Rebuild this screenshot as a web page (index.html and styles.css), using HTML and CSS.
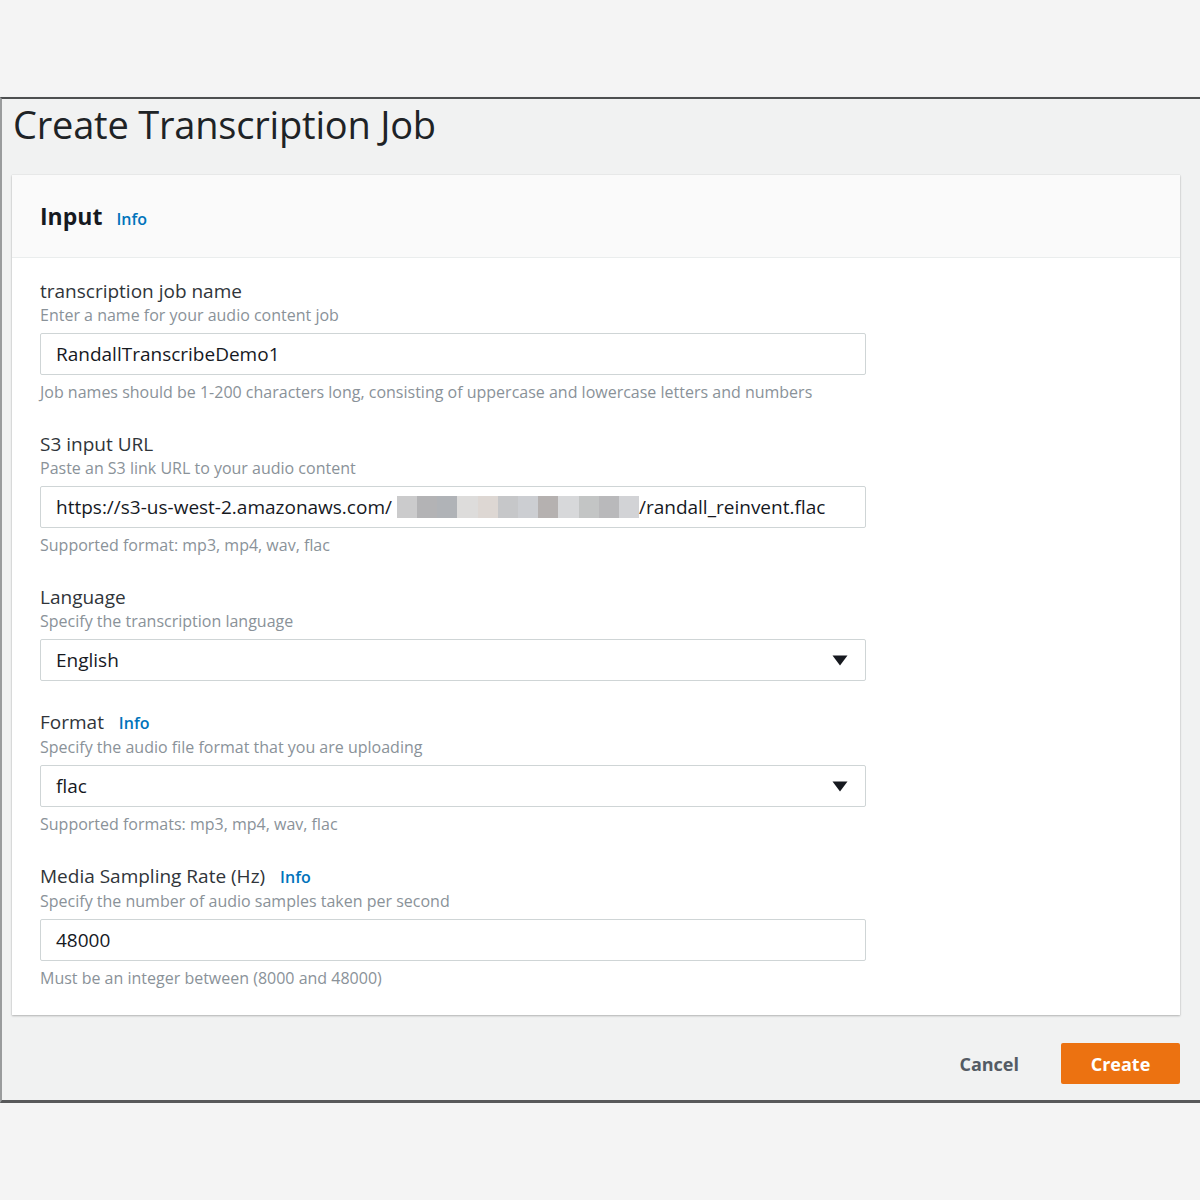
FILE: index.html
```html
<!DOCTYPE html>
<html>
    <head>
        <meta charset="UTF-8">
        <title>Create Transcription Job</title>
        <link rel="stylesheet" href="styles.css">
    </head>
    <body>
        <div class="frame">
            <h1 class="page-title">Create Transcription Job</h1>

            <section class="card">
                <div class="card-header">
                    <h2>Input</h2>
                    <a class="info" href="#">Info</a>
                </div>

                <div class="card-body">
                    <div class="field">
                        <label class="field-label">transcription job name</label>
                        <div class="field-desc">Enter a name for your audio content job</div>
                        <div class="control">RandallTranscribeDemo1</div>
                        <div class="field-hint">Job names should be 1-200 characters long, consisting of uppercase and lowercase letters and numbers</div>
                    </div>

                    <div class="field">
                        <label class="field-label">S3 input URL</label>
                        <div class="field-desc">Paste an S3 link URL to your audio content</div>
                        <div class="control">
                            <span>https://s3-us-west-2.amazonaws.com/</span>
                            <span class="redacted">
                                <i class="px1"></i><i class="px2"></i><i class="px3"></i><i class="px4"></i><i class="px5"></i><i class="px6"></i><i class="px7"></i><i class="px8"></i><i class="px9"></i><i class="px10"></i><i class="px11"></i><i class="px12"></i>
                            </span>
                            <span>/randall_reinvent.flac</span>
                        </div>
                        <div class="field-hint">Supported format: mp3, mp4, wav, flac</div>
                    </div>

                    <div class="field">
                        <label class="field-label">Language</label>
                        <div class="field-desc">Specify the transcription language</div>
                        <div class="control select">
                            <span>English</span>
                            <svg class="caret" width="16" height="11" viewBox="0 0 16 11"><path d="M0.5 0.5 H15.5 L8 10.5 Z" fill="#16191f"/></svg>
                        </div>
                    </div>

                    <div class="field">
                        <label class="field-label">Format <a class="info" href="#">Info</a></label>
                        <div class="field-desc">Specify the audio file format that you are uploading</div>
                        <div class="control select">
                            <span>flac</span>
                            <svg class="caret" width="16" height="11" viewBox="0 0 16 11"><path d="M0.5 0.5 H15.5 L8 10.5 Z" fill="#16191f"/></svg>
                        </div>
                        <div class="field-hint">Supported formats: mp3, mp4, wav, flac</div>
                    </div>

                    <div class="field">
                        <label class="field-label">Media Sampling Rate (Hz) <a class="info" href="#">Info</a></label>
                        <div class="field-desc">Specify the number of audio samples taken per second</div>
                        <div class="control">48000</div>
                        <div class="field-hint">Must be an integer between (8000 and 48000)</div>
                    </div>
                </div>
            </section>

            <div class="actions">
                <button class="btn-link">Cancel</button>
                <button class="btn-primary">Create</button>
            </div>
        </div>
    </body>
</html>
```

FILE: styles.css
```css
html {
    width: 100%;
    height: 100%;
}

body {
    margin: 0;
    background: #f4f4f4;
    font-family: "Open Sans", sans-serif;
    color: #16191f;
}

.frame {
    margin-top: 97px;
    height: 1006px;
    background: #f1f2f2;
    border-top: 2px solid #4d4f50;
    border-bottom: 3px solid #58595a;
    border-left: 2px solid #9a9c9d;
    box-sizing: border-box;
    box-shadow: 0 1px 2px rgba(0, 0, 0, 0.2);
    display: flex;
    flex-direction: column;
}

.page-title {
    margin: 0;
    padding: 1px 0 0 11px;
    height: 75px;
    font-size: 38px;
    font-weight: 400;
    line-height: 48px;
    color: #1e2326;
    letter-spacing: -0.2px;
}

.card {
    margin: 0 20px 0 10px;
    background: #ffffff;
    box-shadow: 0 1px 2px rgba(0, 0, 0, 0.25), 0 0 1px rgba(0, 0, 0, 0.15);
}

.card-header {
    height: 83px;
    box-sizing: border-box;
    padding: 0 28px;
    display: flex;
    align-items: center;
    background: #fafafa;
    border-bottom: 1px solid #eaeded;
}

.card-header h2 {
    margin: 0;
    font-size: 23px;
    font-weight: 700;
    color: #16191f;
}

.card-header .info {
    margin-left: 14px;
    padding-top: 5px;
}

.info {
    color: #0073bb;
    font-size: 16px;
    font-weight: 600;
    text-decoration: none;
    margin-left: 10px;
}

.card-body {
    padding: 20px 28px 0 28px;
}

.field {
    margin-bottom: 28px;
}

.field:last-child {
    margin-bottom: 26px;
}

.field-label {
    display: block;
    font-size: 19px;
    line-height: 26px;
    color: #30353a;
}

.field-desc,
.field-hint {
    font-size: 16px;
    line-height: 22px;
    color: #8a9299;
}

.field-hint {
    margin-top: 7px;
    line-height: 21px;
}

.control {
    margin-top: 7px;
    width: 826px;
    height: 42px;
    box-sizing: border-box;
    border: 1px solid #cfd5d6;
    border-radius: 2px;
    padding: 0 15px;
    display: flex;
    align-items: center;
    font-size: 19px;
    font-weight: 500;
    color: #16191f;
    white-space: nowrap;
}

.select {
    justify-content: space-between;
}

.caret {
    margin-right: 2px;
}

.redacted {
    display: flex;
    width: 242px;
    height: 22px;
    margin-left: 5px;
}

.redacted i {
    flex: 1;
}

.px1 { background: #cbcbcc; }
.px2 { background: #b3b3b5; }
.px3 { background: #b0b3b7; }
.px4 { background: #dddcdb; }
.px5 { background: #ddd7d3; }
.px6 { background: #c6c7c9; }
.px7 { background: #ccced2; }
.px8 { background: #b5b1b0; }
.px9 { background: #d7d8da; }
.px10 { background: #c3c5c5; }
.px11 { background: #b9b9bb; }
.px12 { background: #d2d3d6; }

.actions {
    display: flex;
    justify-content: flex-end;
    align-items: center;
    padding: 28px 20px 0 0;
    gap: 22px;
}

button {
    font-family: "Open Sans", sans-serif;
    font-size: 18px;
    font-weight: 700;
    border: none;
    cursor: pointer;
}

.btn-link {
    background: none;
    color: #545b64;
    padding: 0 20px;
}

.btn-primary {
    height: 41px;
    width: 119px;
    background: #ec7211;
    color: #ffffff;
    border-radius: 2px;
}
```
